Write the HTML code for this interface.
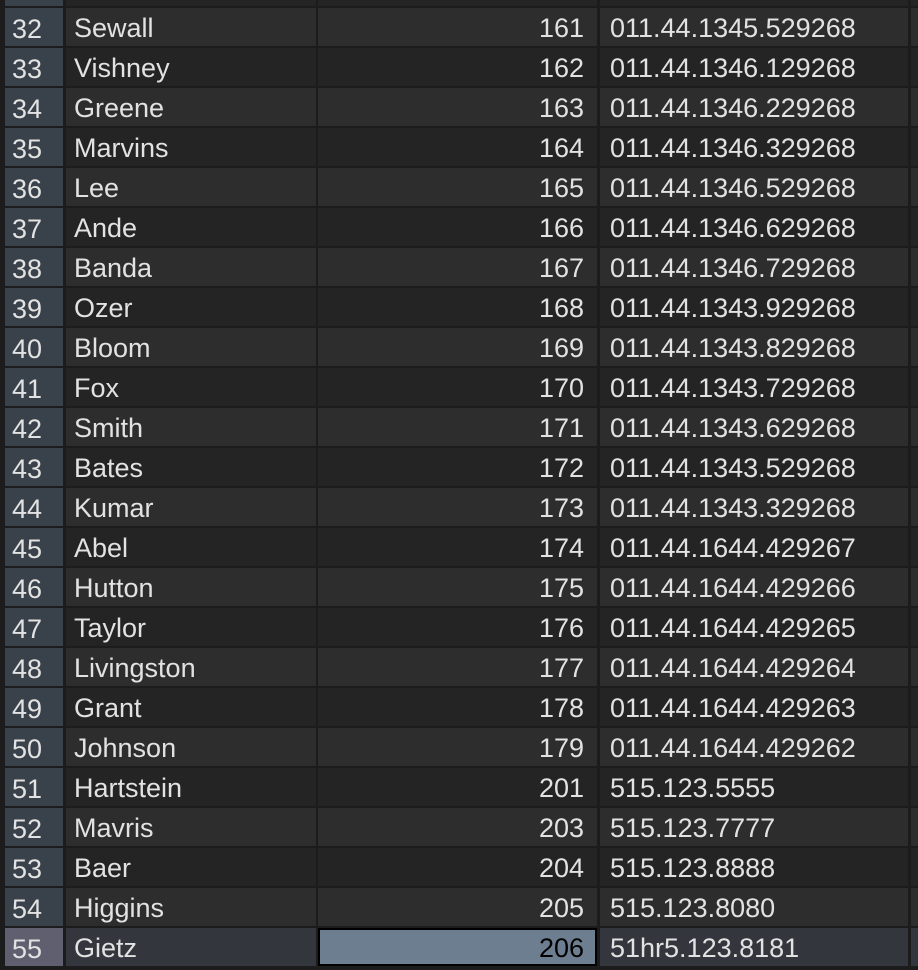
<!DOCTYPE html><html><head><style>
body{margin:0;width:918px;height:968px;overflow:hidden;background:#1c1c1c;font-family:"Liberation Sans",sans-serif;font-size:27px;color:#e2e2e2}
.r{position:absolute;left:0;width:918px;height:38px}
.c{position:absolute;top:0;height:38px;line-height:40px;box-sizing:border-box;white-space:nowrap}
.g{left:5px;width:58px;background:#39414a;padding-left:7px;line-height:42px}
.n{left:66px;width:250px;padding-left:8px}
.m{left:318px;width:279px;text-align:right;padding-right:13px}
.p{left:600px;width:308px;padding-left:10px}
.x{left:911px;width:7px}
.a .n,.a .m,.a .p,.a .x{background:#2d2d2d}
.b .n,.b .m,.b .p,.b .x{background:#242424}
.s .n,.s .p,.s .x{background:#33373d}
.s .g{background:#5f5f70}
.s .m{background:#6e7e91;border:2px solid #000;color:#000;line-height:36px;padding-right:11px}
</style></head><body>
<div class="r b" style="top:-32px"><div class="c g"></div><div class="c n"></div><div class="c m"></div><div class="c p"></div><div class="c x"></div></div>
<div id="t"></div>
<script>
var d=[["Sewall",161,"011.44.1345.529268"],["Vishney",162,"011.44.1346.129268"],["Greene",163,"011.44.1346.229268"],["Marvins",164,"011.44.1346.329268"],["Lee",165,"011.44.1346.529268"],["Ande",166,"011.44.1346.629268"],["Banda",167,"011.44.1346.729268"],["Ozer",168,"011.44.1343.929268"],["Bloom",169,"011.44.1343.829268"],["Fox",170,"011.44.1343.729268"],["Smith",171,"011.44.1343.629268"],["Bates",172,"011.44.1343.529268"],["Kumar",173,"011.44.1343.329268"],["Abel",174,"011.44.1644.429267"],["Hutton",175,"011.44.1644.429266"],["Taylor",176,"011.44.1644.429265"],["Livingston",177,"011.44.1644.429264"],["Grant",178,"011.44.1644.429263"],["Johnson",179,"011.44.1644.429262"],["Hartstein",201,"515.123.5555"],["Mavris",203,"515.123.7777"],["Baer",204,"515.123.8888"],["Higgins",205,"515.123.8080"],["Gietz",206,"51hr5.123.8181"]];
var h="";d.forEach(function(r,i){var cls=i==23?"s":(i%2?"b":"a");h+='<div class="r '+cls+'" style="top:'+(8+i*40)+'px"><div class="c g">'+(32+i)+'</div><div class="c n">'+r[0]+'</div><div class="c m">'+r[1]+'</div><div class="c p">'+r[2]+'</div><div class="c x"></div></div>';});
document.getElementById("t").innerHTML=h;
</script>
</body></html>
